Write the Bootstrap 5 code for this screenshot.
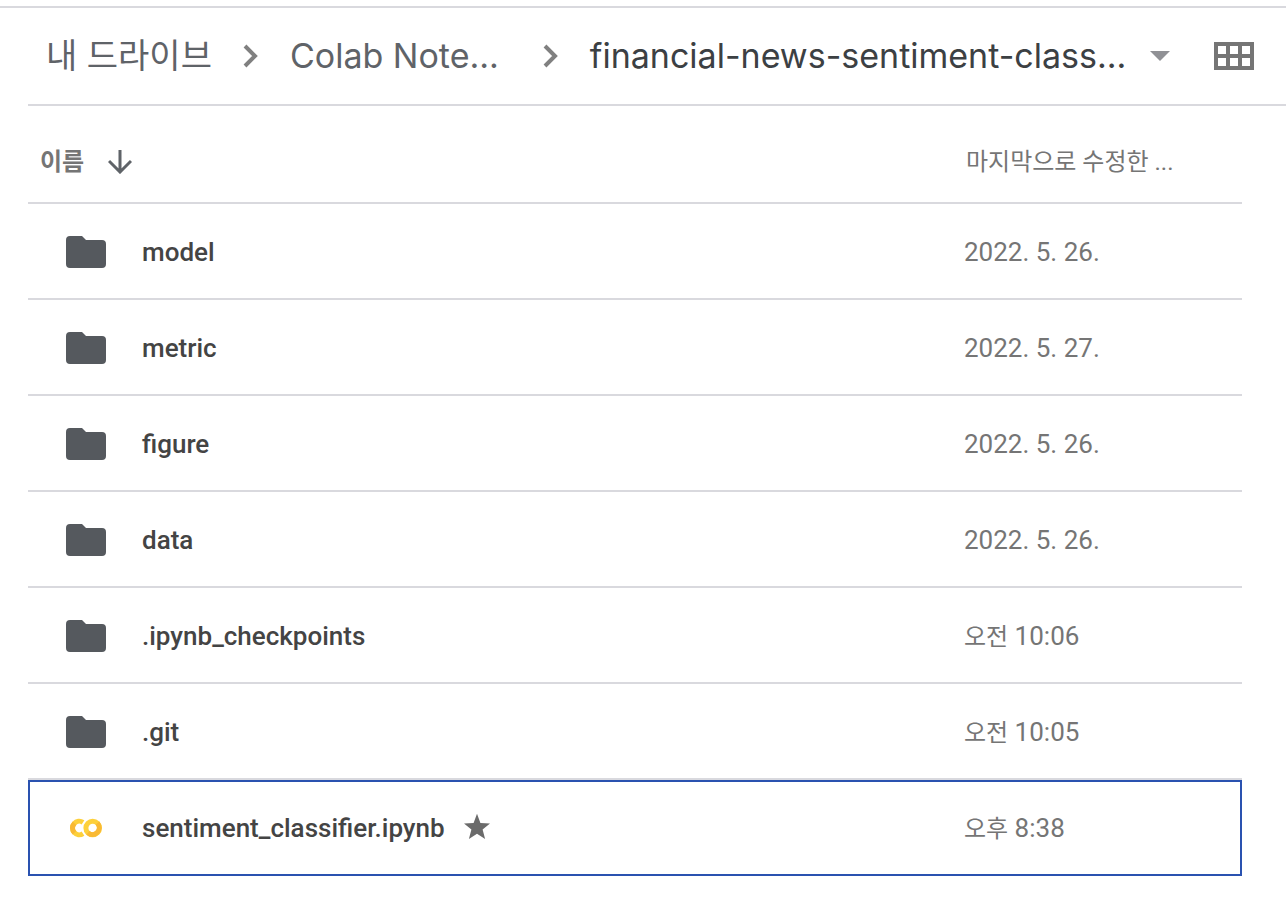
<!DOCTYPE html>
<html lang="ko">
<head>
<meta charset="utf-8">
<meta name="viewport" content="width=device-width, initial-scale=1">
<title>내 드라이브</title>
<link href="https://cdn.jsdelivr.net/npm/bootstrap@5.3.0/dist/css/bootstrap.min.css" rel="stylesheet">
<style>
body { font-family: Roboto, "Noto Sans CJK KR", sans-serif; background: #fff; color: #444; }
svg { display: block; flex: none; }
.path-bar { border-top: 2px solid #d9d9de; margin-top: 6px; padding-left: 28px; }
.path-row { height: 98px; border-bottom: 2px solid #d9d9de; padding: 0 32px 0 18px; }
.crumb { font-family: Inter, sans-serif; font-size: 34px; line-height: 48px; color: #5f6368; text-decoration: none; white-space: nowrap; }
.crumb-ko { font-family: "Noto Sans CJK KR", sans-serif; padding-bottom: 4px; }
.crumb-cut { padding-right: 13px; }
.crumb-now { color: #3c4043; }
.sep { margin: 0 31px; }
.files { margin: 0 44px 0 28px; }
.files table { table-layout: fixed; width: 100%; border-collapse: separate; border-spacing: 0; }
.files th, .files td { padding: 0; border-bottom: 2px solid #d9d9de; vertical-align: middle; }
.files thead th { height: 98px; padding: 15px 0 0 12px; }
.files thead .date-col { width: 278px; padding-left: 2px; }
.files tbody td { height: 96px; padding-top: 2px; }
.head-btn { font-size: 24px; line-height: 32px; color: #757575; }
.file-cell { padding-left: 38px; gap: 36px; }
.file-name { font-size: 26px; line-height: 32px; font-weight: 500; color: #444; text-decoration: none; }
.file-date { font-size: 26px; line-height: 32px; color: #757575; }
.ampm { font-size: 24px; }
.files .picked td { border-bottom-width: 0; padding-top: 0; }
.picked { outline: 2px solid #2a52b0; outline-offset: -2px; }
</style>
</head>
<body>
<svg width="0" height="0" class="position-absolute" aria-hidden="true">
<symbol id="folder" viewBox="0 0 40 32"><path fill="#55595e" d="M4 0h12l4 4h16a4 4 0 0 1 4 4v20a4 4 0 0 1-4 4H4a4 4 0 0 1-4-4V4a4 4 0 0 1 4-4z"/></symbol>
<symbol id="chevron" viewBox="0 0 16 24"><path fill="none" stroke="#808080" stroke-width="4" d="M2 2l10 10L2 22"/></symbol>
</svg>
<header class="path-bar">
<nav class="path-row d-flex align-items-center" aria-label="경로">
<a class="crumb crumb-ko" href="#">내 드라이브</a>
<svg class="sep" width="16" height="24" aria-hidden="true"><use href="#chevron"/></svg>
<a class="crumb crumb-cut" href="#">Colab Note...</a>
<svg class="sep" width="16" height="24" aria-hidden="true"><use href="#chevron"/></svg>
<button class="btn border-0 p-0 d-flex align-items-center gap-4 crumb crumb-now" type="button">financial-news-sentiment-class...
<svg width="20" height="10" viewBox="0 0 20 10" aria-hidden="true"><path fill="#909195" d="M0 0h20L10 10z"/></svg></button>
<button class="btn border-0 p-0 ms-auto" type="button" aria-label="그리드 레이아웃"><svg width="40" height="28" viewBox="0 0 40 28"><path fill="#757575" fill-rule="evenodd" d="M0 0h40v28H0zM4 4v8h8V4zM16 4v8h8V4zM28 4v8h8V4zM4 16v8h8v-8zM16 16v8h8v-8zM28 16v8h8v-8z"/></svg></button>
</nav>
</header>
<main class="files">
<table>
<thead><tr>
<th><button class="btn p-0 border-0 head-btn fw-bold d-flex align-items-center gap-4" type="button">이름
<svg width="24" height="24" viewBox="0 0 24 24" aria-hidden="true"><path fill="none" stroke="#5f6368" stroke-width="3" d="M12 0v22M1 11l11 11 11-11"/></svg></button></th>
<th class="date-col"><button class="btn p-0 border-0 head-btn" type="button">마지막으로 수정한 ...</button></th>
</tr></thead>
<tbody>
<tr><td><div class="file-cell d-flex align-items-center"><svg width="40" height="32" aria-hidden="true"><use href="#folder"/></svg><a class="file-name" href="#">model</a></div></td><td class="file-date">2022. 5. 26.</td></tr>
<tr><td><div class="file-cell d-flex align-items-center"><svg width="40" height="32" aria-hidden="true"><use href="#folder"/></svg><a class="file-name" href="#">metric</a></div></td><td class="file-date">2022. 5. 27.</td></tr>
<tr><td><div class="file-cell d-flex align-items-center"><svg width="40" height="32" aria-hidden="true"><use href="#folder"/></svg><a class="file-name" href="#">figure</a></div></td><td class="file-date">2022. 5. 26.</td></tr>
<tr><td><div class="file-cell d-flex align-items-center"><svg width="40" height="32" aria-hidden="true"><use href="#folder"/></svg><a class="file-name" href="#">data</a></div></td><td class="file-date">2022. 5. 26.</td></tr>
<tr><td><div class="file-cell d-flex align-items-center"><svg width="40" height="32" aria-hidden="true"><use href="#folder"/></svg><a class="file-name" href="#">.ipynb_checkpoints</a></div></td><td class="file-date"><span class="ampm">오전</span> 10:06</td></tr>
<tr><td><div class="file-cell d-flex align-items-center"><svg width="40" height="32" aria-hidden="true"><use href="#folder"/></svg><a class="file-name" href="#">.git</a></div></td><td class="file-date"><span class="ampm">오전</span> 10:05</td></tr>
<tr class="picked"><td><div class="file-cell d-flex align-items-center">
<svg width="40" height="32" viewBox="0 0 40 32" fill="none" stroke-width="5" aria-hidden="true"><path stroke="#fdd03b" d="M17 21.700A6.800 6.800 0 1 1 17 10.300"/><path stroke="#f9b934" d="M8.500 20.800A6.800 6.800 0 0 1 8.500 11.200"/><circle cx="26.700" cy="16" r="10.400" fill="#fff"/><circle cx="26.700" cy="16" r="6.800" stroke="#fdd03b"/><path stroke="#f9b934" d="M31.500 11.200A6.800 6.800 0 0 1 21.900 20.800"/></svg>
<div class="d-flex align-items-center"><a class="file-name" href="#">sentiment_classifier.ipynb</a>
<svg class="ms-3" width="32" height="32" viewBox="1 1 32 32" role="img" aria-label="중요"><path fill="#6b6b6b" d="M17 2.800l3.400 9.200 9.600.5-7.400 6 2.500 9.500-8.100-5.300L8.900 28l2.500-9.500-7.400-6 9.600-.5z"/></svg></div></div></td><td class="file-date"><span class="ampm">오후</span> 8:38</td></tr>
</tbody>
</table>
</main>
<script src="https://cdn.jsdelivr.net/npm/bootstrap@5.3.0/dist/js/bootstrap.bundle.min.js"></script>
</body>
</html>
